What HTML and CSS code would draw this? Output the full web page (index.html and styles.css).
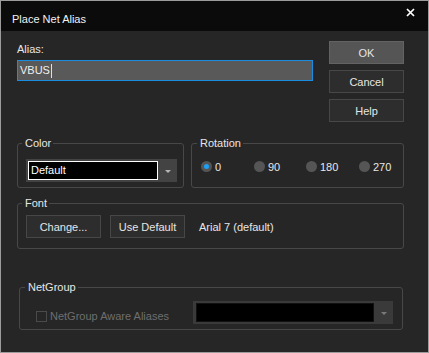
FILE: index.html
```html
<!DOCTYPE html>
<html>
<head>
<meta charset="utf-8">
<title>Place Net Alias</title>
<link rel="stylesheet" href="styles.css">
</head>
<body>
<div class="window">
  <div class="titlebar">
    <span class="title">Place Net Alias</span>
    <svg class="close" width="9" height="9" viewBox="0 0 9 9"><path d="M1 1 L8 8 M8 1 L1 8" stroke="#ffffff" stroke-width="1.7" fill="none"/></svg>
  </div>
  <div class="content">
    <div class="top-row">
      <div class="alias-col">
        <div class="alias-label">Alias:</div>
        <div class="textbox">VBUS<span class="caret"></span></div>
      </div>
      <div class="btn-col">
        <button class="btn btn-default">OK</button>
        <button class="btn">Cancel</button>
        <button class="btn">Help</button>
      </div>
    </div>

    <div class="group-row">
      <fieldset class="group group-color">
        <legend>Color</legend>
        <div class="combo">
          <div class="combo-field">Default</div>
          <div class="combo-arrow"><span class="tri"></span></div>
        </div>
      </fieldset>
      <fieldset class="group group-rotation">
        <legend>Rotation</legend>
        <div class="radios">
          <div class="radio-item"><span class="radio checked"></span><span>0</span></div>
          <div class="radio-item"><span class="radio"></span><span>90</span></div>
          <div class="radio-item"><span class="radio"></span><span>180</span></div>
          <div class="radio-item"><span class="radio"></span><span>270</span></div>
        </div>
      </fieldset>
    </div>

    <fieldset class="group group-font">
      <legend>Font</legend>
      <div class="font-row">
        <button class="btn">Change...</button>
        <button class="btn">Use Default</button>
        <span class="font-name">Arial 7 (default)</span>
      </div>
    </fieldset>

    <fieldset class="group group-netgroup">
      <legend>NetGroup</legend>
      <div class="net-row">
        <div class="check-label"><span class="checkbox"></span><span>NetGroup Aware Aliases</span></div>
        <div class="combo combo-disabled">
          <div class="combo-field"></div>
          <div class="combo-arrow"><span class="tri"></span></div>
        </div>
      </div>
    </fieldset>
  </div>
</div>
</body>
</html>
```

FILE: styles.css
```css
* { box-sizing: border-box; }

html, body {
  margin: 0;
  padding: 0;
  background: #262626;
}

body {
  font-family: "Liberation Sans", Arial, sans-serif;
  font-size: 11px;
  line-height: 14px;
  color: #e6e6e6;
}

.window {
  width: 429px;
  height: 353px;
  border: 1px solid #9c9c9c;
  background: #262626;
  overflow: hidden;
}

.titlebar {
  height: 30px;
  background: #0b0b0b;
  display: flex;
  justify-content: space-between;
  align-items: flex-start;
  padding: 0 13px 0 11px;
}

.title {
  margin-top: 11px;
  color: #f2f2f2;
}

.close {
  margin-top: 7px;
  display: block;
}

.content {
  padding: 10px 24px 0 16px;
}

.top-row {
  display: flex;
  gap: 16px;
  align-items: flex-start;
}

.alias-col {
  width: 296px;
  margin-top: 1px;
}

.alias-label {
  height: 14px;
}

.textbox {
  margin-top: 4px;
  height: 21px;
  border: 1px solid #1a8de0;
  background: #595959;
  color: #f0f0f0;
  padding: 0 0 0 2px;
  line-height: 19px;
  font-size: 11px;
  display: flex;
  align-items: center;
}

.caret {
  display: inline-block;
  width: 1px;
  height: 14px;
  background: #e0e0e0;
  margin-left: 1px;
}

.btn-col {
  width: 75px;
  display: flex;
  flex-direction: column;
  gap: 6px;
}

.btn {
  width: 75px;
  height: 23px;
  margin: 0;
  padding: 0;
  border: 1px solid #474747;
  background: #2d2d2d;
  color: #e6e6e6;
  font-family: "Liberation Sans", Arial, sans-serif;
  font-size: 11px;
  line-height: 14px;
  flex: none;
}

.btn-default {
  background: #555555;
  border-color: #636363;
}

.group {
  margin: 0;
  border: 1px solid #484848;
  border-radius: 3px;
  min-width: 0;
}

.group legend {
  padding: 0 2px 0 3px;
  margin-left: -4px;
  line-height: 13px;
  height: 13px;
  color: #e6e6e6;
}

.group-row {
  margin-top: 15px;
  display: flex;
  gap: 7px;
}

.group-color {
  width: 167px;
  padding: 9px 6px 5px 8px;
}

.group-rotation {
  width: 213px;
  padding: 9px 0 5px 9px;
}

.combo {
  width: 151px;
  height: 23px;
  background: #434343;
  display: flex;
  align-items: stretch;
  padding: 2px 0 2px 2px;
}

.combo-field {
  width: 130px;
  background: #000000;
  border: 1px solid #ffffff;
  color: #ffffff;
  font-size: 11px;
  line-height: 17px;
  padding-left: 2px;
}

.combo-arrow {
  flex: 1;
  display: flex;
  align-items: center;
  justify-content: center;
}

.tri {
  width: 0;
  height: 0;
  border-left: 3px solid transparent;
  border-right: 3px solid transparent;
  border-top: 3px solid #b4b4b4;
  margin-top: 1px;
}

.radios {
  display: flex;
  height: 15px;
  align-items: center;
}

.radio-item {
  flex: none;
  width: 53px;
  display: flex;
  align-items: center;
  gap: 3px;
}

.radio-item:nth-child(2) {
  width: 52px;
}

.radio-item:last-child {
  width: auto;
}

.radio {
  width: 11px;
  height: 11px;
  border-radius: 50%;
  background: #555555;
  display: flex;
  align-items: center;
  justify-content: center;
}

.radio.checked::after {
  content: "";
  width: 5px;
  height: 5px;
  border-radius: 50%;
  background: #1ea0f5;
}

.group-font {
  margin-top: 9px;
  width: 387px;
  padding: 5px 8px 10px 8px;
}

.font-row {
  display: flex;
  align-items: center;
  gap: 9px;
}

.font-name {
  margin-left: 5px;
}

.group-netgroup {
  margin-top: 32px;
  margin-left: 2px;
  width: 384px;
  padding: 7px 8px 5px 16px;
}

.group-netgroup legend {
  margin-left: -11px;
}

.net-row {
  display: flex;
  align-items: flex-start;
}

.check-label {
  width: 157px;
  flex: none;
  margin-top: 8px;
  display: flex;
  align-items: center;
  gap: 3px;
  color: #6e6e6e;
}

.checkbox {
  width: 11px;
  height: 11px;
  border: 1px solid #4a4a4a;
}

.combo-disabled {
  width: 200px;
  background: #3a3a3a;
  padding: 2px 0 2px 3px;
}

.combo-disabled .combo-field {
  width: 178px;
  border-color: #111111;
}

.combo-disabled .tri {
  border-top-color: #7a7a7a;
}
```
